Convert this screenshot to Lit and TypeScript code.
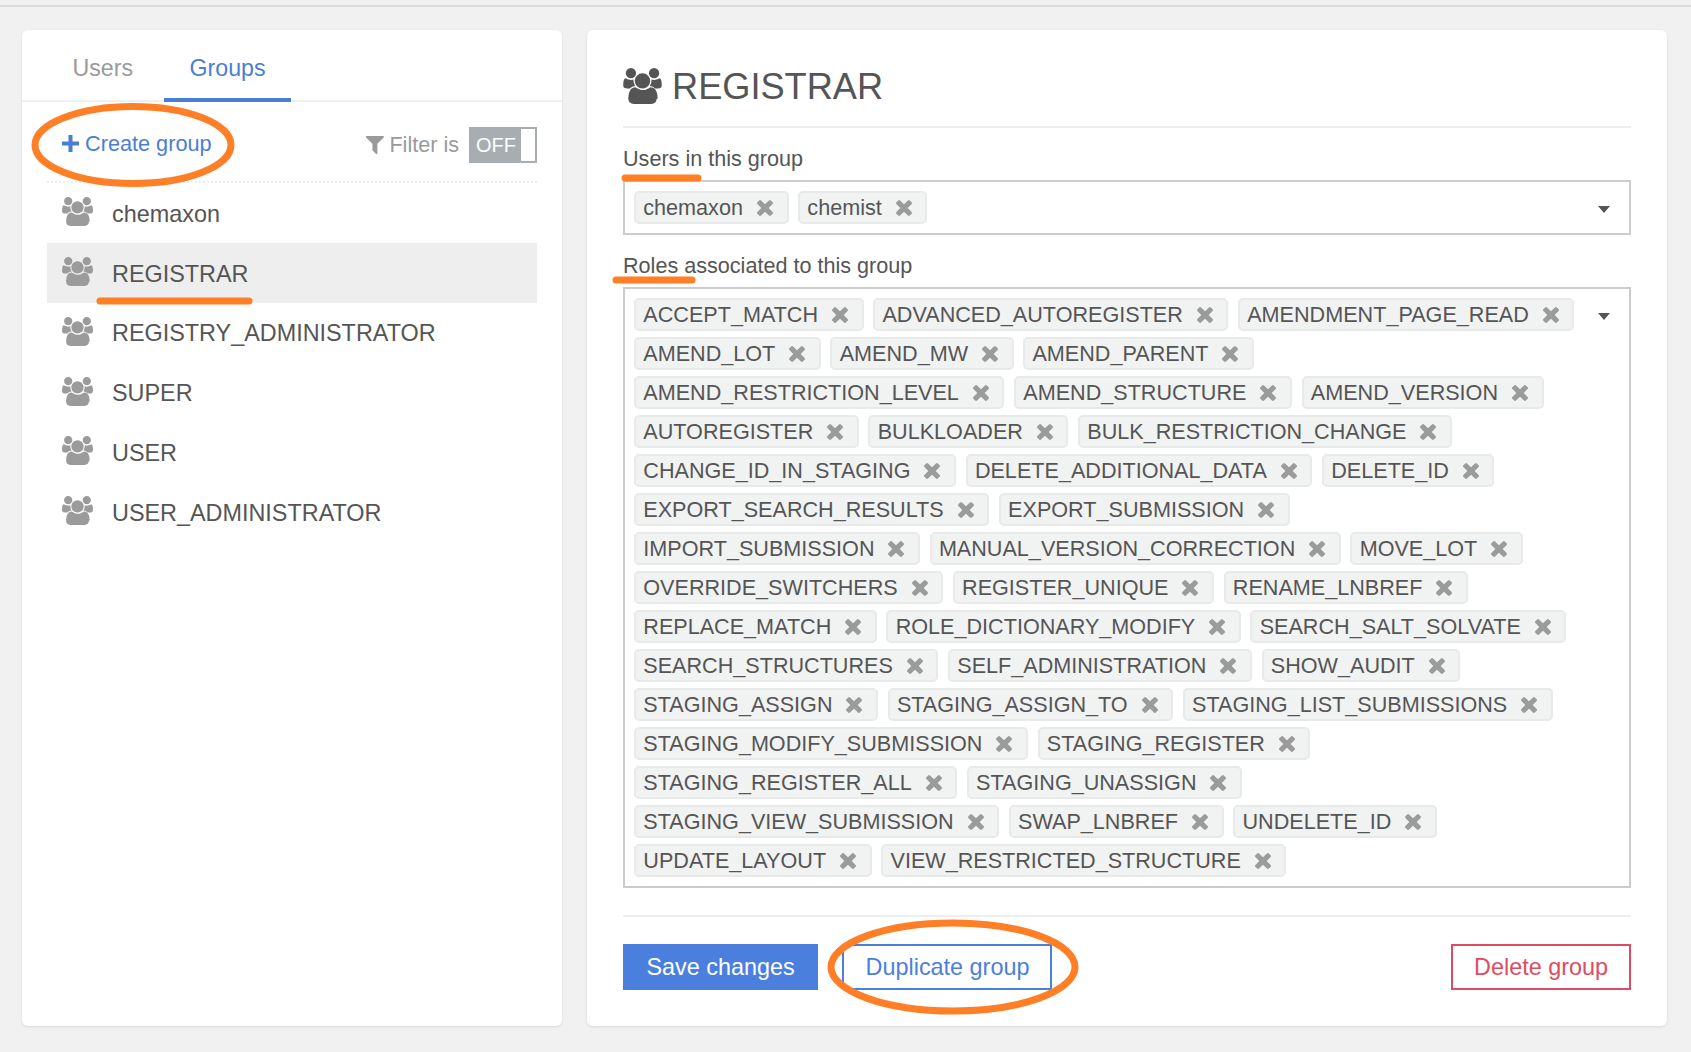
import { LitElement, html, css, svg } from "lit";
import { customElement } from "lit/decorators.js";

const USERS_PATH = "M657 896q-162 5-265 128h-134q-82 0-138-40.5t-56-118.5q0-353 124-353 6 0 43.5 21t97.5 42.5 119 21.5q67 0 133-23-5 37-5 66 0 139 81 256zm1071 637q0 120-73 189.5t-194 69.5h-874q-121 0-194-69.5t-73-189.5q0-53 3.5-103.5t14-109 26.5-108.5 43-97.5 62-81 85.5-53.5 111.5-20q10 0 43 21.5t97.5 48 107 48 135 21.5 135-21.5 107-48 97.5-48 43-21.5q61 0 111.5 20t85.5 53.5 62 81 43 97.5 26.5 108.5 14 109 3.5 103.5zm-1024-1277q0 106-75 181t-181 75-181-75-75-181 75-181 181-75 181 75 75 181zm704 384q0 159-112.5 271.5t-271.5 112.5-271.5-112.5-112.5-271.5 112.5-271.5 271.5-112.5 271.5 112.5 112.5 271.5zm576 225q0 78-56 118.5t-138 40.5h-134q-103-123-265-128 81-117 81-256 0-29-5-66 66 23 133 23 59 0 119-21.5t97.5-42.5 43.5-21q124 0 124 353zm-128-609q0 106-75 181t-181 75-181-75-75-181 75-181 181-75 181 75 75 181z";
const FILTER_PATH = "M1595 295q17 41-14 70l-493 493v742q0 42-39 59-13 5-25 5-27 0-45-19l-256-256q-19-19-19-45v-486l-493-493q-31-29-14-70 17-39 59-39h1280q42 0 59 39z";
const X_PATH = "M1490 1322q0 40-28 68l-136 136q-28 28-68 28t-68-28l-294-294-294 294q-28 28-68 28t-68-28l-136-136q-28-28-28-68t28-68l294-294-294-294q-28-28-28-68t28-68l136-136q28-28 68-28t68 28l294 294 294-294q28-28 68-28t68 28l136 136q28 28 28 68t-28 68l-294 294 294 294q28 28 28 68z";

const GROUPS = ["chemaxon", "REGISTRAR", "REGISTRY_ADMINISTRATOR", "SUPER", "USER", "USER_ADMINISTRATOR"];
const USERS = ["chemaxon", "chemist"];
const ROLES = [
  "ACCEPT_MATCH", "ADVANCED_AUTOREGISTER", "AMENDMENT_PAGE_READ", "AMEND_LOT", "AMEND_MW", "AMEND_PARENT",
  "AMEND_RESTRICTION_LEVEL", "AMEND_STRUCTURE", "AMEND_VERSION", "AUTOREGISTER", "BULKLOADER", "BULK_RESTRICTION_CHANGE",
  "CHANGE_ID_IN_STAGING", "DELETE_ADDITIONAL_DATA", "DELETE_ID", "EXPORT_SEARCH_RESULTS", "EXPORT_SUBMISSION",
  "IMPORT_SUBMISSION", "MANUAL_VERSION_CORRECTION", "MOVE_LOT", "OVERRIDE_SWITCHERS", "REGISTER_UNIQUE", "RENAME_LNBREF",
  "REPLACE_MATCH", "ROLE_DICTIONARY_MODIFY", "SEARCH_SALT_SOLVATE", "SEARCH_STRUCTURES", "SELF_ADMINISTRATION", "SHOW_AUDIT",
  "STAGING_ASSIGN", "STAGING_ASSIGN_TO", "STAGING_LIST_SUBMISSIONS", "STAGING_MODIFY_SUBMISSION", "STAGING_REGISTER",
  "STAGING_REGISTER_ALL", "STAGING_UNASSIGN", "STAGING_VIEW_SUBMISSION", "SWAP_LNBREF", "UNDELETE_ID", "UPDATE_LAYOUT",
  "VIEW_RESTRICTED_STRUCTURE",
];

@customElement("app-root")
export class AppRoot extends LitElement {
  static styles = css`
    :host {
      display: block;
      position: relative;
      height: 1052px;
      overflow: hidden;
      background: #f1f1f1;
      font-family: "Liberation Sans", Arial, sans-serif;
      color: #555;
    }
    .topline { height: 5px; border-bottom: 2px solid #d9d9d9; }
    .main {
      display: grid;
      grid-template-columns: 540px 1080px;
      column-gap: 25px;
      padding: 23px 0 0 22px;
    }
    .card {
      height: 996px;
      box-sizing: border-box;
      background: #fff;
      border-radius: 6px;
      box-shadow: 0 1px 3px rgba(0,0,0,.1);
    }
    .tabs {
      display: flex;
      height: 72px;
      box-sizing: border-box;
      padding-left: 25px;
      border-bottom: 2px solid #f0f0f0;
    }
    .tab {
      height: 72px;
      box-sizing: border-box;
      padding: 24px 26px 0 25.5px;
      font-size: 23.2px;
      line-height: 28px;
      color: #9a9a9a;
    }
    .tab.active {
      margin-left: 5px;
      padding-right: 25px;
      color: #4a7ed6;
      border-bottom: 4px solid #4a7ed6;
    }
    .side { padding: 0 25px; }
    .toolbar {
      display: flex;
      align-items: center;
      justify-content: space-between;
      height: 81px;
      box-sizing: border-box;
      padding: 4px 0 0 15px;
      border-bottom: 2px dotted #eee;
    }
    .create {
      display: flex;
      align-items: center;
      gap: 6px;
      color: #4a7ed6;
      font-size: 21.7px;
    }
    .plus { width: 17px; height: 17px; fill: #4a7ed6; }
    .filter {
      display: flex;
      align-items: center;
      color: #9a9a9a;
      font-size: 21.6px;
      padding-top: 3px;
    }
    .filter svg { width: 19px; height: 19px; fill: #9a9a9a; margin-right: 5px; }
    .toggle {
      display: flex;
      width: 68px;
      height: 36px;
      box-sizing: border-box;
      margin-left: 10px;
      border: 2px solid #a7adb0;
      background: #a7adb0;
      color: #fff;
      font-size: 20px;
      line-height: 32px;
    }
    .toggle span { width: 50px; padding-left: 5px; box-sizing: border-box; }
    .toggle i { flex: 1; background: #fff; }
    .row {
      display: flex;
      align-items: center;
      height: 59.8px;
      padding-left: 15px;
      font-size: 23.4px;
      color: #555;
    }
    .row span { padding-top: 3px; }
    .row.sel { background: #eee; }
    .row svg { width: 31px; height: 29px; margin: -2.5px 19px 0 0; fill: #9b9b9b; flex: none; }
    .detail { padding: 30px 36px 0; }
    .title {
      display: flex;
      align-items: center;
      gap: 10px;
      height: 52px;
      font-size: 36.2px;
      color: #555;
    }
    .title span { padding-top: 2px; }
    .title svg { width: 39px; height: 36px; fill: #555; margin-top: -1px; }
    .rule { height: 2px; background: #eee; }
    .title + .rule { margin-top: 14px; }
    .label { font-size: 21.6px; line-height: 30px; color: #555; }
    .label.users { margin: 16px 0 6px; }
    .label.roles { margin: 16px 0 6px; }
    .box {
      display: flex;
      box-sizing: border-box;
      border: 2px solid #ccc;
      padding: 9px 19px 9px 9px;
    }
    .tags {
      flex: 1;
      display: flex;
      flex-wrap: wrap;
      gap: 6px 9.5px;
      margin-right: 20px;
    }
    .tag {
      display: flex;
      align-items: center;
      height: 33px;
      box-sizing: border-box;
      padding: 0 13.6px 0 7.3px;
      gap: 14px;
      border: 2px solid #e8eaea;
      border-radius: 5px;
      background: #f1f2f2;
      font-size: 21.6px;
      color: #555;
      white-space: nowrap;
    }
    .tag svg { width: 16px; height: 16px; fill: #9b9b9b; flex: none; margin-top: 1px; }
    .caret {
      flex: none;
      width: 0;
      height: 0;
      margin-top: 15px;
      border-left: 6.5px solid transparent;
      border-right: 6.5px solid transparent;
      border-top: 7px solid #555;
    }
    .box + .rule { margin-top: 27px; }
    .actions {
      display: flex;
      margin-top: 27px;
    }
    .btn {
      display: flex;
      align-items: center;
      justify-content: center;
      height: 46px;
      box-sizing: border-box;
      font-size: 23.4px;
    }
    .save { width: 195px; background: #4a7fde; color: #fff; }
    .dup { width: 210px; margin-left: 24px; padding-left: 1px; border: 2px solid #4a7fde; color: #4a7fde; }
    .del { width: 180px; margin-left: auto; border: 2px solid #de4b62; color: #de4b62; }
    .marks {
      position: absolute;
      inset: 0;
      width: 1691px;
      height: 1052px;
      pointer-events: none;
    }
  `;

  private icon(path: string, box: string) {
    return html`<svg viewBox=${box}><path d=${path}></path></svg>`;
  }

  private tags(items: string[]) {
    return html`<div class="tags">
      ${items.map((t) => html`<div class="tag">${t}${this.icon(X_PATH, "302 366 1188 1188")}</div>`)}
    </div>`;
  }

  render() {
    return html`
      <div class="topline"></div>
      <div class="main">
        <section class="card">
          <nav class="tabs">
            <div class="tab">Users</div>
            <div class="tab active">Groups</div>
          </nav>
          <div class="side">
            <div class="toolbar">
              <div class="create">
                <svg class="plus" viewBox="0 0 17 17"><path d="M6.5 0h4v6.5H17v4h-6.5V17h-4v-6.5H0v-4h6.5z"></path></svg>
                Create group
              </div>
              <div class="filter">
                ${this.icon(FILTER_PATH, "128 256 1472 1472")}
                Filter is
                <div class="toggle"><span>OFF</span><i></i></div>
              </div>
            </div>
            ${GROUPS.map(
              (g) => html`<div class="row ${g === "REGISTRAR" ? "sel" : ""}">
                ${this.icon(USERS_PATH, "64 0 1920 1792")}<span>${g}</span>
              </div>`
            )}
          </div>
        </section>
        <section class="card detail">
          <div class="title">${this.icon(USERS_PATH, "64 0 1920 1792")}<span>REGISTRAR</span></div>
          <div class="rule"></div>
          <div class="label users">Users in this group</div>
          <div class="box">${this.tags(USERS)}<div class="caret"></div></div>
          <div class="label roles">Roles associated to this group</div>
          <div class="box">${this.tags(ROLES)}<div class="caret"></div></div>
          <div class="rule"></div>
          <div class="actions">
            <div class="btn save">Save changes</div>
            <div class="btn dup">Duplicate group</div>
            <div class="btn del">Delete group</div>
          </div>
        </section>
      </div>
      <svg class="marks" viewBox="0 0 1691 1052" fill="none" stroke="#ff7f27" stroke-width="7" stroke-linecap="round">
        ${svg`
          <ellipse cx="133" cy="145" rx="98" ry="38.5"></ellipse>
          <ellipse cx="953" cy="967" rx="122" ry="44"></ellipse>
          <line x1="100" y1="301" x2="249" y2="301"></line>
          <line x1="625" y1="178" x2="698" y2="178"></line>
          <line x1="616" y1="280" x2="692" y2="280"></line>
        `}
      </svg>
    `;
  }
}
